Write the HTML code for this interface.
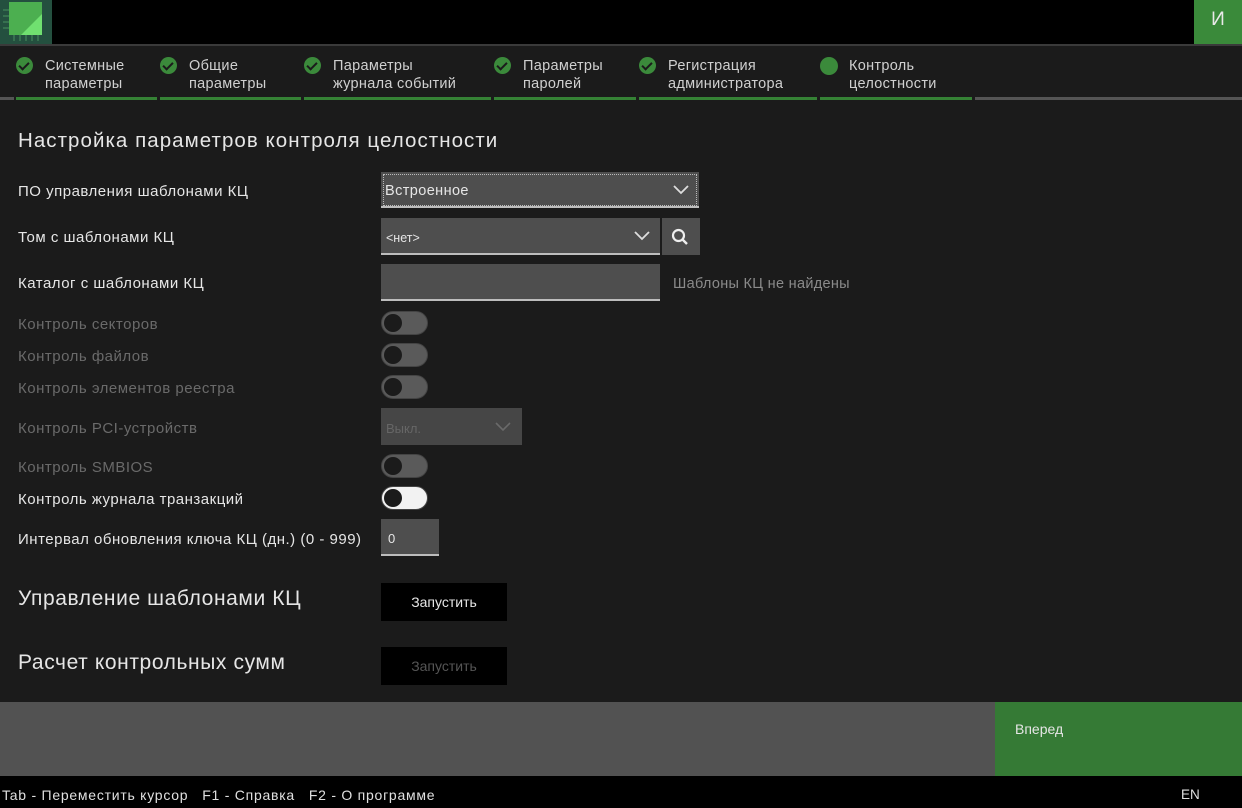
<!DOCTYPE html>
<html><head><meta charset="utf-8"><style>
*{margin:0;padding:0;box-sizing:border-box}
body{width:1242px;height:808px;background:#1b1b1b;font-family:"Liberation Sans",sans-serif;color:#e6e6e6;position:relative;overflow:hidden}
.a{position:absolute}
.lbl{position:absolute;left:18px;font-size:15px;letter-spacing:0.5px;white-space:nowrap}
.dim{color:#6a6a6a}
.tab{position:absolute;top:57px;font-size:14.5px;line-height:18px;color:#d0d0d0;letter-spacing:0.3px}
.ck{position:absolute;top:57px;width:17px;height:17px;border-radius:50%;background:#3b8a3b}
.ck:after{content:"";position:absolute;left:5px;top:3px;width:4px;height:8px;border:solid #1b1b1b;border-width:0 2.5px 2.5px 0;transform:rotate(45deg)}
.ul{position:absolute;top:97px;height:3px}
.tg{position:absolute;left:381px;width:47px;height:24px;border-radius:12px;background:#5a5a5a;border:1px solid #444}
.tg:after{content:"";position:absolute;left:2px;top:2px;width:18px;height:18px;border-radius:50%;background:#1b1b1b}
.inp{position:absolute;background:#4e4e4e;border-bottom:2px solid #bdbdbd}
.h{position:absolute;left:18px;font-size:21px;letter-spacing:0.6px;white-space:nowrap}
</style></head><body>
<div class="a" style="left:0;top:0;width:1242px;height:44px;background:#000"></div>
<div class="a" style="left:0;top:44px;width:1242px;height:2px;background:#3a3a3a"></div>
<div class="a" style="left:0;top:0;width:52px;height:44px;background:#24503f"></div>
<svg class="a" style="left:0;top:0" width="52" height="44">
<g stroke="#3d7a55" stroke-width="1.5"><line x1="3" y1="10" x2="9" y2="10"/><line x1="3" y1="16" x2="9" y2="16"/><line x1="3" y1="22" x2="9" y2="22"/><line x1="3" y1="28" x2="9" y2="28"/>
<line x1="14" y1="35" x2="14" y2="41"/><line x1="20" y1="35" x2="20" y2="41"/><line x1="26" y1="35" x2="26" y2="41"/><line x1="32" y1="35" x2="32" y2="41"/><line x1="38" y1="35" x2="38" y2="41"/></g>
<rect x="9" y="2" width="33" height="33" fill="#4caf50"/>
<polygon points="42,14 42,35 21,35" fill="#70e070"/>
</svg>
<div class="a" style="left:1194px;top:0;width:48px;height:44px;background:#3a8a3a;color:#e8e8e8;font-size:19px;text-align:center;line-height:40px">И</div>

<div class="ck" style="left:16px"></div><div class="tab" style="left:45px">Системные<br>параметры</div>
<div class="ck" style="left:160px"></div><div class="tab" style="left:189px">Общие<br>параметры</div>
<div class="ck" style="left:304px"></div><div class="tab" style="left:333px">Параметры<br>журнала событий</div>
<div class="ck" style="left:494px"></div><div class="tab" style="left:523px">Параметры<br>паролей</div>
<div class="ck" style="left:639px"></div><div class="tab" style="left:668px">Регистрация<br>администратора</div>
<div class="a" style="left:820px;top:57px;width:18px;height:18px;border-radius:50%;background:#3b8a3b"></div><div class="tab" style="left:849px">Контроль<br>целостности</div>
<div class="ul" style="left:0;width:14px;background:#555"></div>
<div class="ul" style="left:16px;width:141px;background:#358235"></div>
<div class="ul" style="left:160px;width:141px;background:#358235"></div>
<div class="ul" style="left:304px;width:187px;background:#358235"></div>
<div class="ul" style="left:494px;width:142px;background:#358235"></div>
<div class="ul" style="left:639px;width:178px;background:#358235"></div>
<div class="ul" style="left:820px;width:152px;background:#358235"></div>
<div class="ul" style="left:975px;width:267px;background:#555"></div>

<div class="h" style="top:129px;font-size:20.5px;letter-spacing:1.05px">Настройка параметров контроля целостности</div>
<div class="lbl" style="top:183px">ПО управления шаблонами КЦ</div>
<div class="lbl" style="top:229px">Том с шаблонами КЦ</div>
<div class="lbl" style="top:275px">Каталог с шаблонами КЦ</div>
<div class="lbl dim" style="top:316px">Контроль секторов</div>
<div class="lbl dim" style="top:348px">Контроль файлов</div>
<div class="lbl dim" style="top:380px">Контроль элементов реестра</div>
<div class="lbl dim" style="top:420px">Контроль PCI-устройств</div>
<div class="lbl dim" style="top:459px">Контроль SMBIOS</div>
<div class="lbl" style="top:491px">Контроль журнала транзакций</div>
<div class="lbl" style="top:531px">Интервал обновления ключа КЦ (дн.) (0 - 999)</div>

<div class="inp" style="left:381px;top:172px;width:318px;height:36px;outline:1px dotted #bbb;outline-offset:-3px"></div>
<div class="a" style="left:385px;top:183px;font-size:14.5px;letter-spacing:0.4px">Встроенное</div>
<svg class="a" style="left:673px;top:183px" width="16" height="12"><path d="M1 3 L8 10 L15 3" stroke="#ddd" stroke-width="1.8" fill="none"/></svg>

<div class="inp" style="left:381px;top:218px;width:279px;height:37px"></div>
<div class="a" style="left:386px;top:231px;font-size:12.5px">&lt;нет&gt;</div>
<svg class="a" style="left:634px;top:229px" width="16" height="12"><path d="M1 3 L8 10 L15 3" stroke="#ddd" stroke-width="1.8" fill="none"/></svg>
<div class="a" style="left:662px;top:218px;width:38px;height:37px;background:#4e4e4e"></div>
<svg class="a" style="left:670px;top:227px" width="22" height="22"><circle cx="8.5" cy="8.5" r="5.5" stroke="#eee" stroke-width="2.2" fill="none"/><line x1="12.5" y1="12.5" x2="17" y2="17" stroke="#eee" stroke-width="2.4"/></svg>

<div class="inp" style="left:381px;top:264px;width:279px;height:37px"></div>
<div class="a" style="left:673px;top:276px;font-size:14.5px;color:#8a8a8a;letter-spacing:0.3px">Шаблоны КЦ не найдены</div>

<div class="tg" style="top:311px"></div>
<div class="tg" style="top:343px"></div>
<div class="tg" style="top:375px"></div>
<div class="a" style="left:381px;top:408px;width:141px;height:37px;background:#464646"></div>
<div class="a" style="left:386px;top:421px;font-size:13px;color:#666">Выкл.</div>
<svg class="a" style="left:495px;top:420px" width="16" height="12"><path d="M1 3 L8 10 L15 3" stroke="#6a6a6a" stroke-width="1.6" fill="none"/></svg>
<div class="tg" style="top:454px"></div>
<div class="tg" style="top:486px;background:#f2f2f2"></div>
<div class="inp" style="left:381px;top:519px;width:58px;height:37px"></div>
<div class="a" style="left:388px;top:531px;font-size:13px">0</div>

<div class="h" style="top:587px">Управление шаблонами КЦ</div>
<div class="a" style="left:381px;top:583px;width:126px;height:38px;background:#000;color:#e6e6e6;font-size:14px;text-align:center;line-height:38px">Запустить</div>
<div class="h" style="top:651px">Расчет контрольных сумм</div>
<div class="a" style="left:381px;top:647px;width:126px;height:38px;background:#000;color:#555;font-size:14px;text-align:center;line-height:38px">Запустить</div>

<div class="a" style="left:0;top:702px;width:995px;height:74px;background:#525252"></div>
<div class="a" style="left:995px;top:702px;width:247px;height:74px;background:#357a35"></div>
<div class="a" style="left:1015px;top:721px;font-size:14px;color:#e6e6e6">Вперед</div>
<div class="a" style="left:0;top:776px;width:1242px;height:32px;background:#000"></div>
<div class="a" style="left:2px;top:787px;font-size:14px;color:#e0e0e0;letter-spacing:0.75px;white-space:nowrap">Tab - Переместить курсор&nbsp;&nbsp; F1 - Справка&nbsp;&nbsp; F2 - О программе</div>
<div class="a" style="left:1181px;top:787px;font-size:13.5px;color:#e0e0e0">EN</div>
</body></html>
